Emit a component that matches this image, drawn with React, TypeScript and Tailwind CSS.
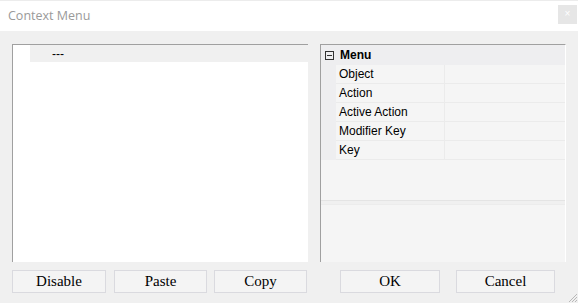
import React from "react";

const rows = ["Object", "Action", "Active Action", "Modifier Key", "Key"];

function Btn({ label, w, ml }: { label: string; w: string; ml: string }) {
  return (
    <div
      className={`${w} ${ml} h-[23px] border border-[#dadadf] bg-[#f4f4f4] flex items-center justify-center text-[15px] text-black`}
      style={{ fontFamily: '"Liberation Serif", "Times New Roman", serif' }}
    >
      {label}
    </div>
  );
}

export default function App() {
  return (
    <div
      className="w-[578px] h-[303px] bg-[#f0f0f0] flex flex-col relative overflow-hidden"
      style={{ fontFamily: '"Liberation Sans", Arial, sans-serif' }}
    >
      {/* title bar */}
      <div className="h-[31px] bg-white border-t border-[#ececec] flex items-center justify-between pl-[8px] pr-[1px]">
        <span className="text-[12.5px] text-[#9a9a9a]" style={{ fontFamily: '"Open Sans", "Noto Sans", sans-serif' }}>
          Context Menu
        </span>
        <div className="w-[19px] h-[19px] bg-[#e6e6e6] flex items-center justify-center text-white text-[10px] leading-none mt-[-4px]">
          ×
        </div>
      </div>

      {/* panels */}
      <div className="flex pl-[12px] pt-[13px] gap-[12px]">
        <div className="w-[296px] h-[218px] bg-white border-t border-l border-[#a0a0a0] pl-[17px]">
          <div className="h-[17px] bg-[#f0f0f0] flex items-center pl-[22px] text-[12px] text-black">---</div>
        </div>

        <div className="w-[246px] h-[218px] bg-[#f5f5f5] border-t border-l border-r border-t-[#a0a0a0] border-l-[#a0a0a0] border-r-white flex flex-col text-[12px] text-black">
          <div className="h-[20px] bg-[#eeeef0] flex items-center">
            <div className="ml-[4px] w-[9px] h-[9px] border border-[#333] relative flex items-center justify-center">
              <div className="w-[5px] h-px bg-[#333]" />
            </div>
            <span className="ml-[6px] font-bold">Menu</span>
          </div>
          {rows.map((r) => (
            <div key={r} className="h-[19px] flex">
              <div className="w-[15px] bg-[#eeeef0]" />
              <div className="w-[109px] border-b border-r border-[#ebebeb] flex items-center pl-[3px]">{r}</div>
              <div className="flex-1 border-b border-[#ebebeb]" />
            </div>
          ))}
          <div className="h-[40px]" />
          <div className="h-[4px] border-t border-[#e4e4e4] bg-[#f0f0f0]" />
          <div className="flex-1 bg-[#f5f5f5] border-t border-[#ececec]" />
        </div>
      </div>

      {/* buttons */}
      <div className="flex pl-[12px] pt-[8px]">
        <Btn label="Disable" w="w-[94px]" ml="ml-0" />
        <Btn label="Paste" w="w-[93px]" ml="ml-[8px]" />
        <Btn label="Copy" w="w-[93px]" ml="ml-[7px]" />
        <Btn label="OK" w="w-[100px]" ml="ml-[33px]" />
        <Btn label="Cancel" w="w-[99px]" ml="ml-[16px]" />
      </div>

      {/* resize grip */}
      <svg className="absolute right-0 bottom-0" width="12" height="12" viewBox="0 0 12 12">
        <line x1="11" y1="3" x2="3" y2="11" stroke="#b8b8b8" strokeWidth="1" />
        <line x1="11" y1="6" x2="6" y2="11" stroke="#b8b8b8" strokeWidth="1" />
        <line x1="11" y1="9" x2="9" y2="11" stroke="#b8b8b8" strokeWidth="1" />
      </svg>
    </div>
  );
}
